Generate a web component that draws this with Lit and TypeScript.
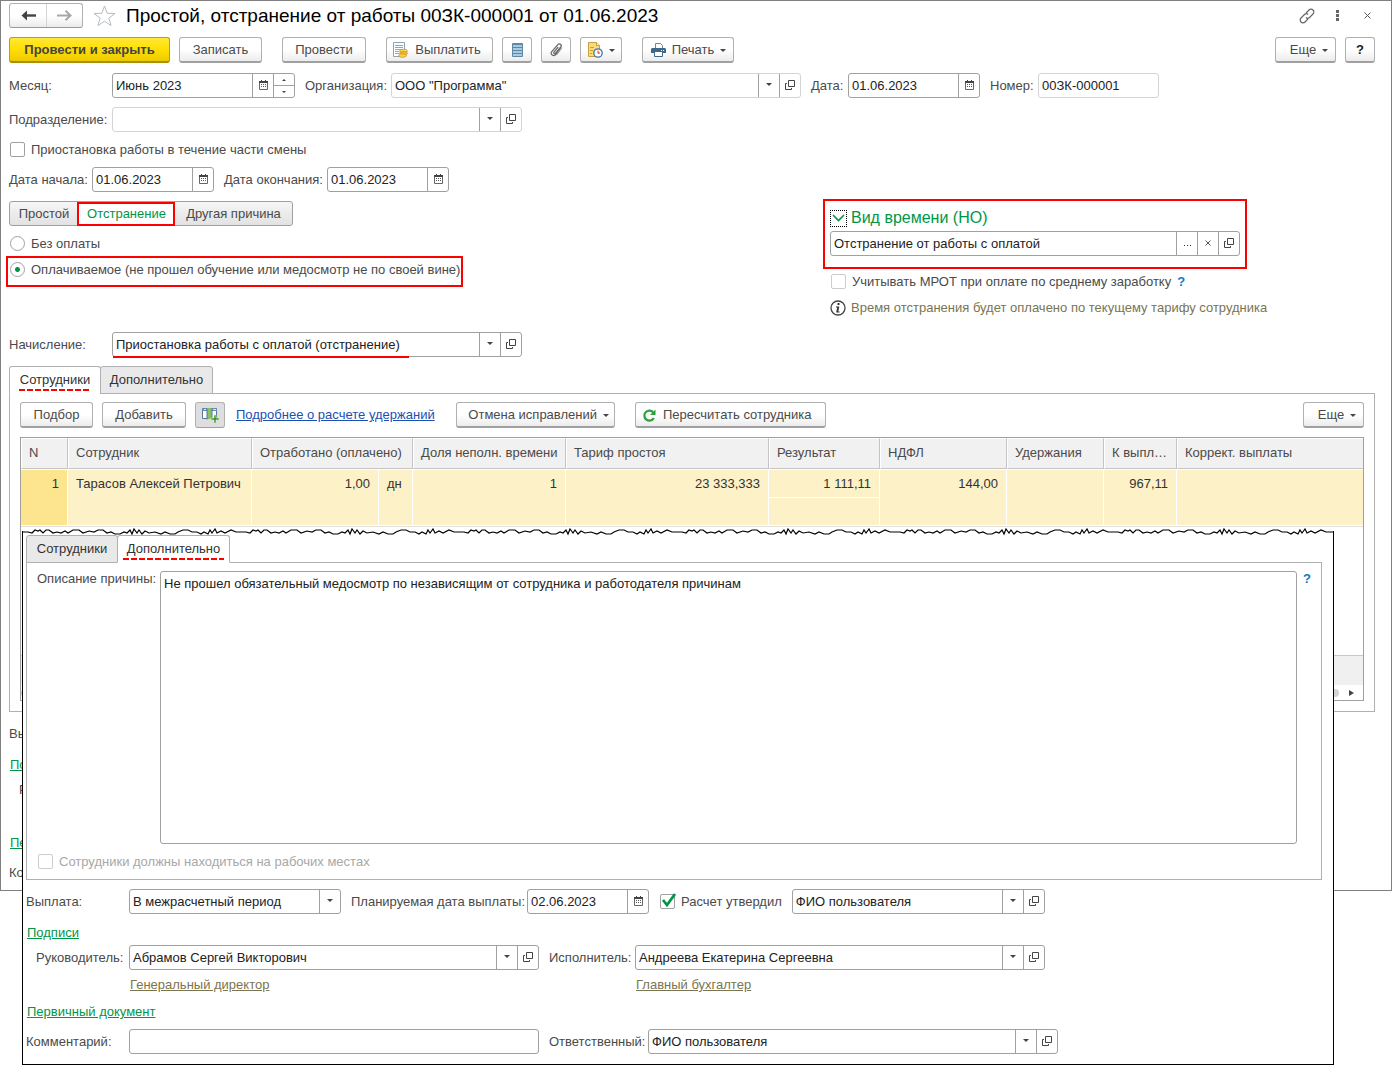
import { LitElement, html, css, svg, nothing, TemplateResult } from "lit";
import { customElement, state } from "lit/decorators.js";
import { classMap } from "lit/directives/class-map.js";

const icons: Record<string, TemplateResult> = {
  down: html`<svg width="6" height="3" viewBox="0 0 6 3" aria-hidden="true"><path d="M0 0h6L3 3z" fill="#444" /></svg>`,
  open: html`<svg width="10" height="10" viewBox="0 0 10 10" fill="none" stroke="#444" aria-hidden="true"><path d="M3.5 .5h6v6h-6z" /><path d="M2 3.500h-1.500v6h6v-1.500" /></svg>`,
  calendar: html`<svg width="9" height="10" viewBox="0 0 9 10" aria-hidden="true"><path d="M.5 1.500h8v8h-8z" fill="#fff" stroke="#666" /><path d="M0 1h9v2h-9z" fill="#444" /><path d="M2 0h1v2h-1zM6 0h1v2h-1z" fill="#444" /><path d="M2 4h1v1h-1zM4 4h1v1h-1zM6 4h1v1h-1zM2 6h1v1h-1zM4 6h1v1h-1zM6 6h1v1h-1z" fill="#555" /></svg>`,
  dots: html`<svg width="9" height="7" viewBox="0 0 9 7" aria-hidden="true"><path d="M1 6h1v1h-1zM4 6h1v1h-1zM7 6h1v1h-1z" fill="#333" /></svg>`,
  clear: html`<svg width="6" height="6" viewBox="0 0 6 6" aria-hidden="true"><path d="M.5 .5l5 5M5.500 .5l-5 5" stroke="#555" /></svg>`,
  back: html`<svg width="15" height="11" viewBox="0 0 15 11" aria-hidden="true"><path d="M0.500 5.500L6 .5V10.500z" fill="#444" /><path d="M7 0L2 5.500L7 11" fill="none" stroke="#fff" stroke-width="0" /><path d="M4 5.500h11" stroke="#444" stroke-width="2.400" /></svg>`,
  forward: html`<svg width="15" height="11" viewBox="0 0 15 11" aria-hidden="true"><path d="M8.500 .8L13.500 5.500L8.500 10.200M13 5.500h-13" fill="none" stroke="#a8a8a8" stroke-width="2" /></svg>`,
  star: html`<svg width="23" height="22" viewBox="0 0 23 22" aria-hidden="true"><path d="M11.500 1L14.200 8.300L22 8.500L15.800 13.200L18 20.500L11.500 16.200L5 20.500L7.200 13.200L1 8.500L8.800 8.300z" fill="#fff" stroke="#b4bcc4" /></svg>`,
  link: html`<svg width="16" height="16" viewBox="0 0 16 16" fill="none" stroke="#666" stroke-width="1.200" aria-hidden="true"><path d="M7 5l3-3a2.600 2.600 0 0 1 4 4l-3.500 3.500a2.600 2.600 0 0 1-3.600 0" /><path d="M9 11l-3 3a2.600 2.600 0 0 1-4-4l3.500-3.500a2.600 2.600 0 0 1 3.600 0" /></svg>`,
  more: html`<svg width="3" height="11" viewBox="0 0 3 11" aria-hidden="true"><path d="M0 0h3v3h-3zM0 4h3v3h-3zM0 8h3v3h-3z" fill="#666" /></svg>`,
  close: html`<svg width="7" height="7" viewBox="0 0 7 7" aria-hidden="true"><path d="M.5 .5l6 6M6.500 .5l-6 6" stroke="#555" /></svg>`,
  pay: html`<svg width="16" height="16" viewBox="0 0 16 16" aria-hidden="true"><path d="M1.500 .5h11v14h-11z" fill="#fff" stroke="#8aa4b8" /><path d="M3 3.500h8M3 5.500h8M3 7.500h8M3 9.500h4M3 11.500h4" stroke="#8aa9c0" /><ellipse cx="11.500" cy="9" rx="4" ry="1.800" fill="#f6d65a" stroke="#c08a1c" stroke-width=".6" /><ellipse cx="11.500" cy="11.300" rx="4" ry="1.800" fill="#efb928" stroke="#c08a1c" stroke-width=".6" /><ellipse cx="10.500" cy="13.600" rx="4" ry="1.800" fill="#f6cf4a" stroke="#c08a1c" stroke-width=".6" /></svg>`,
  list: html`<svg width="11" height="14" viewBox="0 0 11 14" aria-hidden="true"><path d="M.5 .5h10v13h-10z" fill="#a9cbe0" stroke="#5f88a4" /><path d="M1 1h9v1h-9z" fill="#5f88a4" /><path d="M1 4.500h9M1 7.500h9M1 10.500h9" stroke="#5f88a4" /></svg>`,
  clip: html`<svg width="13" height="14" viewBox="0 0 13 14" fill="none" stroke="#666" stroke-width="1.200" aria-hidden="true"><path d="M10.800 5.200L5.600 11.600a2.400 2.400 0 0 1-3.800-3L7.800 1.600a1.900 1.900 0 0 1 3 2.400L5.600 10.200a1 1 0 0 1-1.600-1.200L8.200 4" /><path d="M12 4.500L6.500 12" stroke="#999" /></svg>`,
  schedule: html`<svg width="16" height="16" viewBox="0 0 16 16" aria-hidden="true"><path d="M1.500 .5h8l3 3v11h-11z" fill="#f8dc7c" stroke="#c9a13c" /><path d="M9.500 .5v3h3" fill="#fff4c8" stroke="#c9a13c" /><path d="M3 5.500h4M3 8.500h3M3 11.500h2" stroke="#c9a13c" /><circle cx="11" cy="11" r="4.200" fill="#fff" stroke="#4472a8" stroke-width="1.300" /><path d="M11 8.500v3M11 11h2" stroke="#d33" /></svg>`,
  print: html`<svg width="15" height="14" viewBox="0 0 15 14" aria-hidden="true"><path d="M4.500 5V.5h5l2 2V5" fill="#fff" stroke="#6a8aa4" /><path d="M1 5h13l1 1v4h-15v-4z" fill="#3e6788" /><path d="M10 7h1v1h-1zM12 7h1v1h-1z" fill="#fff" /><path d="M3.500 8.500h8v5h-8z" fill="#fff" stroke="#3e6788" /></svg>`,
  columns: html`<svg width="17" height="16" viewBox="0 0 17 16" aria-hidden="true"><path d="M.5 1.500h14v10h-14z" fill="#fff" stroke="#58789a" /><path d="M0 1h15v3h-15z" fill="#6a8cb0" /><path d="M5 1h5v11h-5z" fill="#86c06a" /><path d="M5 1.500v11M10 1.500v11" stroke="#58789a" /><path d="M2 2h2v1h-2zM11 2h3v1h-3z" fill="#dfe9f2" /><path d="M12 8h2v3h3v2h-3v3h-2v-3h-3v-2h3z" fill="#3a9a1c" stroke="#e4e4e4" stroke-width=".6" /></svg>`,
  refresh: html`<svg width="13" height="13" viewBox="0 0 13 13" aria-hidden="true"><path d="M10.800 9a5 5 0 1 1-.3-5.200" fill="none" stroke="#2ea03c" stroke-width="2.200" /><path d="M12.500 .5v5.500h-5.500z" fill="#2ea03c" /></svg>`,
  chevron: html`<svg width="13" height="8" viewBox="0 0 13 8" aria-hidden="true"><path d="M1 1l5.500 5.500L12 1" fill="none" stroke="#009646" stroke-width="1.600" /></svg>`,
  info: html`<svg width="16" height="16" viewBox="0 0 16 16" aria-hidden="true"><circle cx="8" cy="8" r="7" fill="#fff" stroke="#444" stroke-width="1.300" /><path d="M7.500 3h2v2h-2zM6 6.500h3.300l-1 5h1.200v1h-3.300l1-5h-1.200z" fill="#333" /></svg>`,
  right: html`<svg width="5" height="6" viewBox="0 0 5 6" aria-hidden="true"><path d="M0 0L5 3L0 6z" fill="#444" /></svg>`,
};

const buttonNames: Record<string, string> = {
  down: "Выбрать из списка",
  open: "Открыть",
  calendar: "Календарь",
  dots: "Выбрать",
  clear: "Очистить",
};

interface FieldSpec {
  id: string;
  value: string;
  size: string;
  buttons?: string[];
  soft?: boolean;
  stepper?: boolean;
}

const field = (f: FieldSpec) => html`
  <span class=${classMap({ field: true, [f.size]: true, soft: !!f.soft })}>
    <input id=${f.id} type="text" .value=${f.value} />
    ${(f.buttons ?? []).map((b) => html`<button class="cell" aria-label=${buttonNames[b]}>${icons[b]}</button>`)}
    ${f.stepper
      ? html`<span class="stepper">
          <button aria-label="Больше"><svg width="4" height="2" viewBox="0 0 4 2"><path d="M0 2h4L2 0z" fill="#444" /></svg></button>
          <button aria-label="Меньше"><svg width="4" height="2" viewBox="0 0 4 2"><path d="M0 0h4L2 2z" fill="#444" /></svg></button>
        </span>`
      : nothing}
  </span>
`;

const tearLine =
  "0,4 5,4 9,5 12,2 15,3 17,2 20,5 23,2 26,2 30,5 34,4 38,5 42,3 45,5 50,2 56,2 60,5 66,3 71,4 75,2 80,2 84,5 88,4 92,6 97,6 101,4 104,5 107,2 109,6 111,1 114,5 116,2 119,6 122,3 126,5 132,4 138,6 142,4 147,6 152,6 155,4 160,2 165,2 169,4 174,4 178,6 181,4 185,6 187,2 189,5 192,1 194,5 198,3 202,5 208,2 213,4 218,4";

@customElement("torn-edge")
export class TornEdge extends LitElement {
  static styles = css`
    :host {
      display: block;
      height: 8px;
    }
    svg {
      display: block;
      width: 100%;
      height: 8px;
    }
  `;
  render() {
    return html`<svg aria-hidden="true">
      <defs>
        <pattern id="tear" width="218" height="8" patternUnits="userSpaceOnUse">
          ${svg`<polygon points="${tearLine} 218,8 0,8" fill="#fff"></polygon>
          <polyline points=${tearLine} fill="none" stroke="#000" stroke-width="1.200"></polyline>`}
        </pattern>
      </defs>
      <rect width="100%" height="8" fill="url(#tear)" />
    </svg>`;
  }
}

@customElement("app-root")
export class AppRoot extends LitElement {
  @state() private reason = "Отстранение";

  static styles = css`
    :host {
      display: block;
      position: relative;
      min-height: 100vh;
      box-sizing: border-box;
      background: #fff;
      color: #4a4a4a;
      font: 13px/16px "Liberation Sans", Arial, sans-serif;
    }
    *,
    *::before,
    *::after {
      box-sizing: border-box;
    }
    svg {
      display: block;
      flex: none;
    }
    button,
    input,
    select,
    textarea {
      font: inherit;
      color: inherit;
      margin: 0;
      padding: 0;
      border: 0;
      background: none;
      border-radius: 0;
      outline: 0;
    }
    h1,
    h2 {
      margin: 0;
      font-weight: 400;
    }
    .window {
      display: flex;
      flex-direction: column;
      border: 1px solid #808080;
      padding: 2px 16px 5px 8px;
      background: #fff;
    }
    .row {
      display: flex;
      align-items: center;
      gap: 9px;
    }
    .push {
      margin-left: auto;
    }
    .titlebar {
      height: 25px;
      gap: 10px;
    }
    .titlebar h1 {
      color: #000;
      font-size: 19px;
      line-height: 24px;
    }
    .nav {
      display: flex;
      height: 25px;
      border: 1px solid #b0b0b0;
      border-bottom-color: #999;
      border-radius: 3px;
      background: linear-gradient(#fff 50%, #ececec);
    }
    .nav button {
      display: flex;
      align-items: center;
      justify-content: center;
      width: 36px;
    }
    .nav button + button {
      border-left: 1px solid #d4d4d4;
    }
    .bare {
      display: flex;
      align-items: center;
      justify-content: center;
    }
    .tools {
      gap: 14px;
    }
    .tools .bare {
      width: 16px;
    }
    .commands {
      margin-top: 9px;
    }
    .btn {
      display: flex;
      align-items: center;
      justify-content: center;
      gap: 7px;
      height: 26px;
      padding: 1px 13px 0;
      border: 1px solid #b0b0b0;
      border-bottom: 2px solid #a0a0a0;
      border-radius: 3px;
      background: linear-gradient(#fff 50%, #ececec);
      white-space: nowrap;
    }
    .btn.left-icon {
      padding-left: 7px;
    }
    .btn.menu {
      gap: 6px;
      padding-right: 6px;
    }
    .btn.square {
      width: 30px;
      padding: 0;
    }
    .btn.strong {
      color: #444;
      font-weight: 700;
      border-color: #c0a000;
      border-bottom-color: #a89000;
      background: linear-gradient(#ffe838, #ffdf00 50%, #ecca00);
    }
    .btn.pressed {
      background: #dedede;
      border-bottom-width: 1px;
    }
    .btn.small-menu {
      width: 42px;
      padding-left: 6px;
    }
    .btn.help {
      color: #222;
      font-weight: 700;
    }
    .gap {
      margin-left: 11px;
    }
    .w161 {
      width: 161px;
    }
    .w83 {
      width: 83px;
    }
    .w84 {
      width: 84px;
    }
    .w107 {
      width: 107px;
    }
    .w92 {
      width: 92px;
    }
    .w61 {
      width: 61px;
    }
    .w73 {
      width: 73px;
    }
    .w159 {
      width: 159px;
    }
    .w191 {
      width: 191px;
    }
    .field {
      display: inline-flex;
      height: 25px;
      flex: none;
      border: 1px solid #a0a0a0;
      border-radius: 3px;
      background: #fff;
      color: #222;
    }
    .field.soft {
      border-color: #d4d4d4;
    }
    .field input,
    .field select {
      flex: 1;
      min-width: 0;
      padding: 0 3px;
      appearance: none;
    }
    .cell {
      display: flex;
      align-items: center;
      justify-content: center;
      width: 21px;
      flex: none;
      padding-bottom: 2px;
      border-left: 1px solid #a0a0a0;
    }
    .stepper {
      display: flex;
      flex-direction: column;
      width: 21px;
      border-left: 1px solid #a0a0a0;
    }
    .stepper button {
      display: flex;
      flex: 1;
      align-items: center;
      justify-content: center;
    }
    .stepper button + button {
      border-top: 1px solid #a0a0a0;
    }
    .picker {
      pointer-events: none;
    }
    .s-date {
      width: 122px;
    }
    .s-docdate {
      width: 132px;
    }
    .s-month {
      width: 183px;
    }
    .s-number {
      width: 121px;
    }
    .s-ref {
      width: 410px;
    }
    .s-payout {
      width: 212px;
    }
    .s-user {
      width: 253px;
    }
    .line {
      display: flex;
      align-items: center;
      margin-top: 9px;
      gap: 10px;
    }
    .line.first {
      margin-top: 10px;
    }
    .pair {
      display: flex;
      align-items: center;
      gap: 6px;
      white-space: nowrap;
    }
    .lead {
      width: 97px;
    }
    .l80 {
      width: 80px;
    }
    .l77 {
      width: 77px;
    }
    .l31 {
      width: 31px;
    }
    .l42 {
      width: 42px;
    }
    .l97 {
      width: 97px;
    }
    .l170 {
      width: 170px;
    }
    .l93 {
      width: 93px;
    }
    .check {
      display: flex;
      align-items: center;
      gap: 6px;
      height: 15px;
      white-space: nowrap;
    }
    .check input {
      appearance: none;
      width: 15px;
      height: 15px;
      flex: none;
      margin: 0 0 0 1px;
      border: 1px solid #a0a0a0;
      border-radius: 2px;
      background: #fff;
    }
    .check input[type="radio"] {
      border-radius: 50%;
    }
    .check input[type="radio"]:checked {
      background: radial-gradient(circle, #009646 0 2px, #fff 3px);
    }
    .check input:disabled {
      border-color: #ccc;
    }
    .check.off {
      color: #a8a8a8;
    }
    .tick {
      position: relative;
      display: flex;
    }
    .tick svg {
      position: absolute;
      left: 2px;
      bottom: 1px;
      pointer-events: none;
    }
    .after {
      margin-top: 10px;
    }
    .split {
      display: grid;
      grid-template-columns: 814px 1fr;
      margin-top: 9px;
    }
    .segments {
      display: inline-flex;
      height: 25px;
      border: 1px solid #a0a0a0;
      border-radius: 3px;
      background: linear-gradient(#f6f6f6, #e2e2e2);
    }
    .segments button {
      position: relative;
      white-space: nowrap;
    }
    .segments button.on {
      background: #fff;
      color: #009646;
    }
    .segments button.on::after {
      content: "";
      position: absolute;
      inset: 0 0 -1px -1px;
      border: 2px solid #f00;
    }
    .seg-a {
      width: 68px;
    }
    .seg-b {
      width: 97px;
    }
    .seg-c {
      width: 117px;
    }
    .marked {
      position: relative;
      margin-top: 1px;
    }
    .marked::after {
      content: "";
      position: absolute;
      inset: -6px -3px -10px;
      border: 2px solid #f00;
      pointer-events: none;
    }
    .options {
      display: flex;
      flex-direction: column;
      align-items: flex-start;
      gap: 10px;
    }
    .aside {
      display: flex;
      flex-direction: column;
      align-items: flex-start;
      margin-top: -2px;
    }
    .time {
      border: 2px solid #f00;
      padding: 8px 5px 11px;
    }
    .time h2 {
      display: flex;
      align-items: center;
      gap: 4px;
      margin-bottom: 4px;
      color: #009646;
      font-size: 16px;
      line-height: 18px;
    }
    .toggle {
      display: flex;
      align-items: center;
      justify-content: center;
      width: 17px;
      height: 17px;
      border: 1px dotted #000;
    }
    .aside .check {
      margin: 5px 0 0 7px;
    }
    .hint {
      color: #0a7cc4;
      font-weight: 700;
      text-decoration: none;
    }
    .note {
      display: flex;
      align-items: center;
      gap: 5px;
      margin: 11px 0 0 7px;
      color: #7a7550;
      white-space: nowrap;
    }
    .accrual {
      margin-top: 16px;
    }
    .underlined {
      position: relative;
    }
    .underlined::after {
      content: "";
      position: absolute;
      left: 104px;
      bottom: -1px;
      width: 296px;
      height: 2px;
      background: #f00;
    }
    .tabs {
      display: flex;
      position: relative;
      height: 28px;
      margin-bottom: -1px;
    }
    .tabs.main {
      margin-top: 9px;
    }
    .tabs button {
      border: 1px solid #b0b0b0;
      background: #e9e9e9;
      color: #333;
      border-radius: 3px 3px 0 0;
    }
    .tabs button + button {
      margin-left: -1px;
    }
    .tabs .people {
      width: 92px;
    }
    .tabs .extra {
      width: 113px;
    }
    .tabs button.on {
      background: #fff;
      border-bottom-color: #fff;
    }
    .tabs button.on span {
      display: inline-block;
      padding: 3px 1px;
      background: repeating-linear-gradient(90deg, #f00 0 6px, transparent 6px 8px) bottom / 100% 2px no-repeat;
    }
    .tabs .extra.on span {
      padding: 3px 4px;
    }
    .sheet {
      border: 1px solid #b0b0b0;
      padding: 8px 10px 10px;
    }
    .blue {
      padding: 0 1px 0 2px;
      color: #1a4fb4;
    }
    .green {
      color: #009646;
    }
    .olive {
      color: #7a7550;
    }
    .grid {
      display: flex;
      flex-direction: column;
      min-height: 264px;
      margin-top: 9px;
      border: 1px solid #a0a0a0;
    }
    table {
      width: 100%;
      table-layout: fixed;
      border-collapse: separate;
      border-spacing: 0;
    }
    th {
      height: 31px;
      padding: 0 3px 2px 7px;
      border: 1px solid #fff;
      border-right: 1px solid #c4c4c4;
      border-bottom: 1px solid #c4c4c4;
      background: #f1f1f1;
      font-weight: 400;
      text-align: left;
      overflow: hidden;
      text-overflow: ellipsis;
      white-space: nowrap;
    }
    th:last-child,
    td.last {
      border-right: 0;
    }
    td {
      height: 28px;
      padding: 6px 8px 0;
      border-right: 1px solid #fff;
      background: #fdf1c7;
      color: #333;
      vertical-align: top;
      white-space: nowrap;
    }
    tbody tr:first-child td {
      border-top: 1px solid #fff;
    }
    tbody tr:last-child td {
      border-top: 1px solid #fff;
    }
    td.num {
      text-align: right;
    }
    td.current {
      background: #fde48f;
    }
    .c-n {
      width: 47px;
    }
    .c-name {
      width: 184px;
    }
    .c-worked {
      width: 127px;
    }
    .c-unit {
      width: 34px;
    }
    .c-share {
      width: 153px;
    }
    .c-rate {
      width: 203px;
    }
    .c-result {
      width: 111px;
    }
    .c-held {
      width: 97px;
    }
    .c-topay {
      width: 73px;
    }
    .rowline {
      height: 1px;
      margin-top: 1px;
      background: #e0e0e0;
    }
    .totals {
      height: 30px;
      margin-top: auto;
      border-top: 1px solid #c8c8c8;
      background: #f0f0f0;
    }
    .scroll {
      display: flex;
      align-items: center;
      justify-content: flex-end;
      gap: 10px;
      height: 15px;
      padding-right: 9px;
    }
    .thumb {
      flex: 1;
      height: 8px;
      border-radius: 4px;
      background: #d4d4d4;
    }
    .section {
      margin-top: 11px;
      line-height: 16px;
    }
    .gutter {
      width: 13px;
      overflow: hidden;
      white-space: nowrap;
    }
    .under {
      height: 25px;
      margin-top: 9px;
      line-height: 25px;
    }
    .indent {
      margin: 4px 0 0 10px;
    }
    .section.low {
      margin-top: 33px;
    }
    .overlay {
      position: absolute;
      top: 531px;
      left: 22px;
      right: 58px;
      border: 1px solid #000;
      border-top: 0;
      padding: 4px 11px 10px 3px;
      background: #fff;
    }
    .overlay torn-edge {
      position: absolute;
      top: -3px;
      left: 0;
      right: 0;
    }
    .describe {
      display: flex;
      align-items: flex-start;
      gap: 6px;
      margin-bottom: 10px;
    }
    .describe label {
      width: 117px;
      white-space: nowrap;
    }
    .describe textarea {
      flex: 1;
      height: 273px;
      padding: 4px 3px;
      border: 1px solid #a0a0a0;
      border-radius: 3px;
      color: #222;
      resize: none;
    }
    .describe .hint {
      width: 8px;
    }
    .people-cols {
      display: grid;
      grid-template-columns: 103px 410px 1fr;
      align-items: center;
      row-gap: 7px;
      margin-top: 4px;
    }
    .people-cols label {
      padding-left: 10px;
    }
    .people-cols .second {
      display: flex;
      align-items: center;
      gap: 6px;
      padding-left: 10px;
    }
    .people-cols .second label {
      width: 80px;
      padding-left: 0;
    }
    .people-cols .shift {
      padding-left: 96px;
    }
    .people-cols a,
    .section a {
      padding-left: 1px;
    }
  `;

  private segment(name: string, cls: string) {
    return html`<button
      class=${classMap({ [cls]: true, on: this.reason === name })}
      aria-pressed=${this.reason === name}
      @click=${() => (this.reason = name)}
    >${name}</button>`;
  }

  private tabs(active: string, main: boolean) {
    const list = [
      ["Сотрудники", "people"],
      ["Дополнительно", "extra"],
    ];
    return html`<div class=${classMap({ tabs: true, main })} role="tablist">
      ${list.map(
        ([t, c]) => html`<button role="tab" aria-selected=${t === active} class=${classMap({ [c]: true, on: t === active })}><span>${t}</span></button>`
      )}
    </div>`;
  }

  private header() {
    return html`
      <div class="row titlebar">
        <div class="nav">
          <button aria-label="Назад">${icons.back}</button>
          <button aria-label="Вперед">${icons.forward}</button>
        </div>
        <button class="bare" aria-label="В избранное">${icons.star}</button>
        <h1>Простой, отстранение от работы 00ЗК-000001 от 01.06.2023</h1>
        <div class="row tools push">
          <button class="bare" aria-label="Ссылка">${icons.link}</button>
          <button class="bare" aria-label="Меню">${icons.more}</button>
          <button class="bare" aria-label="Закрыть">${icons.close}</button>
        </div>
      </div>
      <div class="row commands">
        <button class="btn strong w161">Провести и закрыть</button>
        <button class="btn w83">Записать</button>
        <button class="btn gap w84">Провести</button>
        <button class="btn gap left-icon w107">${icons.pay}Выплатить</button>
        <button class="btn square" aria-label="Реестр">${icons.list}</button>
        <button class="btn square" aria-label="Файлы">${icons.clip}</button>
        <button class="btn menu small-menu" aria-label="Напоминание">${icons.schedule}${icons.down}</button>
        <button class="btn gap menu left-icon w92">${icons.print}Печать ${icons.down}</button>
        <button class="btn menu push w61">Еще ${icons.down}</button>
        <button class="btn square help" aria-label="Справка">?</button>
      </div>
    `;
  }

  private form() {
    return html`
      <div class="line first">
        <div class="pair"><label class="lead" for="month">Месяц:</label>${field({ id: "month", value: "Июнь 2023", size: "s-month", buttons: ["calendar"], stepper: true })}</div>
        <div class="pair"><label class="l80" for="org">Организация:</label>${field({ id: "org", value: 'ООО "Программа"', size: "s-ref", buttons: ["down", "open"], soft: true })}</div>
        <div class="pair"><label class="l31" for="date">Дата:</label>${field({ id: "date", value: "01.06.2023", size: "s-docdate", buttons: ["calendar"] })}</div>
        <div class="pair"><label class="l42" for="number">Номер:</label>${field({ id: "number", value: "00ЗК-000001", size: "s-number", soft: true })}</div>
      </div>
      <div class="line">
        <div class="pair"><label class="lead" for="dept">Подразделение:</label>${field({ id: "dept", value: "", size: "s-ref", buttons: ["down", "open"], soft: true })}</div>
      </div>
      <label class="check after"><input type="checkbox" />Приостановка работы в течение части смены</label>
      <div class="line first">
        <div class="pair"><label class="l77" for="from">Дата начала:</label>${field({ id: "from", value: "01.06.2023", size: "s-date", buttons: ["calendar"] })}</div>
        <div class="pair"><label class="l97" for="to">Дата окончания:</label>${field({ id: "to", value: "01.06.2023", size: "s-date", buttons: ["calendar"] })}</div>
      </div>
      <div class="split">
        <div class="options">
          <div class="segments">
            ${this.segment("Простой", "seg-a")}${this.segment("Отстранение", "seg-b")}${this.segment("Другая причина", "seg-c")}
          </div>
          <label class="check"><input type="radio" name="pay" />Без оплаты</label>
          <label class="check marked"><input type="radio" name="pay" checked />Оплачиваемое (не прошел обучение или медосмотр не по своей вине)</label>
        </div>
        <div class="aside">
          <div class="time">
            <h2><button class="toggle" aria-label="Свернуть" aria-expanded="true">${icons.chevron}</button><label for="time">Вид времени (НО)</label></h2>
            ${field({ id: "time", value: "Отстранение от работы с оплатой", size: "s-ref", buttons: ["dots", "clear", "open"] })}
          </div>
          <label class="check"><input type="checkbox" disabled />Учитывать МРОТ при оплате по среднему заработку <a class="hint" href="#">?</a></label>
          <div class="note">${icons.info}Время отстранения будет оплачено по текущему тарифу сотрудника</div>
        </div>
      </div>
      <div class="line accrual">
        <div class="pair underlined"><label class="lead" for="accrual">Начисление:</label>${field({ id: "accrual", value: "Приостановка работы с оплатой (отстранение)", size: "s-ref", buttons: ["down", "open"] })}</div>
      </div>
    `;
  }

  private employees() {
    return html`
      ${this.tabs("Сотрудники", true)}
      <div class="sheet">
        <div class="row">
          <button class="btn w73">Подбор</button>
          <button class="btn w84">Добавить</button>
          <button class="btn square pressed" aria-label="Показать колонки" aria-pressed="true">${icons.columns}</button>
          <a class="blue" href="#">Подробнее о расчете удержаний</a>
          <button class="btn menu gap w159">Отмена исправлений ${icons.down}</button>
          <button class="btn left-icon gap w191">${icons.refresh}Пересчитать сотрудника</button>
          <button class="btn menu push w61">Еще ${icons.down}</button>
        </div>
        <div class="grid">
          <table>
            <colgroup>
              <col class="c-n" /><col class="c-name" /><col class="c-worked" /><col class="c-unit" /><col class="c-share" />
              <col class="c-rate" /><col class="c-result" /><col class="c-worked" /><col class="c-held" /><col class="c-topay" /><col />
            </colgroup>
            <thead>
              <tr>
                <th>N</th><th>Сотрудник</th><th colspan="2">Отработано (оплачено)</th><th>Доля неполн. времени</th><th>Тариф простоя</th>
                <th>Результат</th><th>НДФЛ</th><th>Удержания</th><th>К выплате</th><th>Коррект. выплаты</th>
              </tr>
            </thead>
            <tbody>
              <tr>
                <td class="num current" rowspan="2">1</td><td rowspan="2">Тарасов Алексей Петрович</td><td class="num" rowspan="2">1,00</td>
                <td rowspan="2">дн</td><td class="num" rowspan="2">1</td><td class="num" rowspan="2">23 333,333</td><td class="num">1 111,11</td>
                <td class="num" rowspan="2">144,00</td><td rowspan="2"></td><td class="num" rowspan="2">967,11</td><td class="last" rowspan="2"></td>
              </tr>
              <tr><td></td></tr>
            </tbody>
          </table>
          <div class="rowline"></div>
          <div class="totals"></div>
          <div class="scroll"><span class="thumb"></span>${icons.right}</div>
        </div>
      </div>
      <div class="gutter">
        <div class="under">Выплата:</div>
        <div class="section"><a class="green" href="#">Подписи</a></div>
        <div class="under indent">Руководитель:</div>
        <div class="section low"><a class="green" href="#">Первичный документ</a></div>
        <div class="under">Комментарий:</div>
      </div>
    `;
  }

  private overlay() {
    return html`
      <section class="overlay">
        <torn-edge></torn-edge>
        ${this.tabs("Дополнительно", false)}
        <div class="sheet">
          <div class="describe">
            <label for="text">Описание причины:</label>
            <textarea id="text" .value=${"Не прошел обязательный медосмотр по независящим от сотрудника и работодателя причинам"}></textarea>
            <a class="hint" href="#">?</a>
          </div>
          <label class="check off"><input type="checkbox" disabled />Сотрудники должны находиться на рабочих местах</label>
        </div>
        <div class="line">
          <div class="pair">
            <label class="lead" for="payout">Выплата:</label>
            <span class="field s-payout"><select id="payout"><option>В межрасчетный период</option></select><span class="cell picker">${icons.down}</span></span>
          </div>
          <div class="pair"><label class="l170" for="plan">Планируемая дата выплаты:</label>${field({ id: "plan", value: "02.06.2023", size: "s-date", buttons: ["calendar"] })}</div>
          <label class="check"><span class="tick"><input type="checkbox" checked /><svg width="16" height="16" viewBox="0 0 16 16"><path d="M2 8l4 5L14 2" fill="none" stroke="#009646" stroke-width="2.800" /></svg></span>Расчет утвердил</label>
          ${field({ id: "approver", value: "ФИО пользователя", size: "s-user", buttons: ["down", "open"] })}
        </div>
        <div class="section"><a class="green" href="#">Подписи</a></div>
        <div class="people-cols">
          <label for="head">Руководитель:</label>
          ${field({ id: "head", value: "Абрамов Сергей Викторович", size: "s-ref", buttons: ["down", "open"] })}
          <div class="second"><label for="exec">Исполнитель:</label>${field({ id: "exec", value: "Андреева Екатерина Сергеевна", size: "s-ref", buttons: ["down", "open"] })}</div>
          <span></span>
          <a class="olive" href="#">Генеральный директор</a>
          <div class="shift"><a class="olive" href="#">Главный бухгалтер</a></div>
        </div>
        <div class="section"><a class="green" href="#">Первичный документ</a></div>
        <div class="line">
          <div class="pair"><label class="lead" for="comment">Комментарий:</label>${field({ id: "comment", value: "", size: "s-ref" })}</div>
          <div class="pair"><label class="l93" for="owner">Ответственный:</label>${field({ id: "owner", value: "ФИО пользователя", size: "s-ref", buttons: ["down", "open"] })}</div>
        </div>
      </section>
    `;
  }

  render() {
    return html`
      <main class="window">${this.header()} ${this.form()} ${this.employees()}</main>
      ${this.overlay()}
    `;
  }
}
